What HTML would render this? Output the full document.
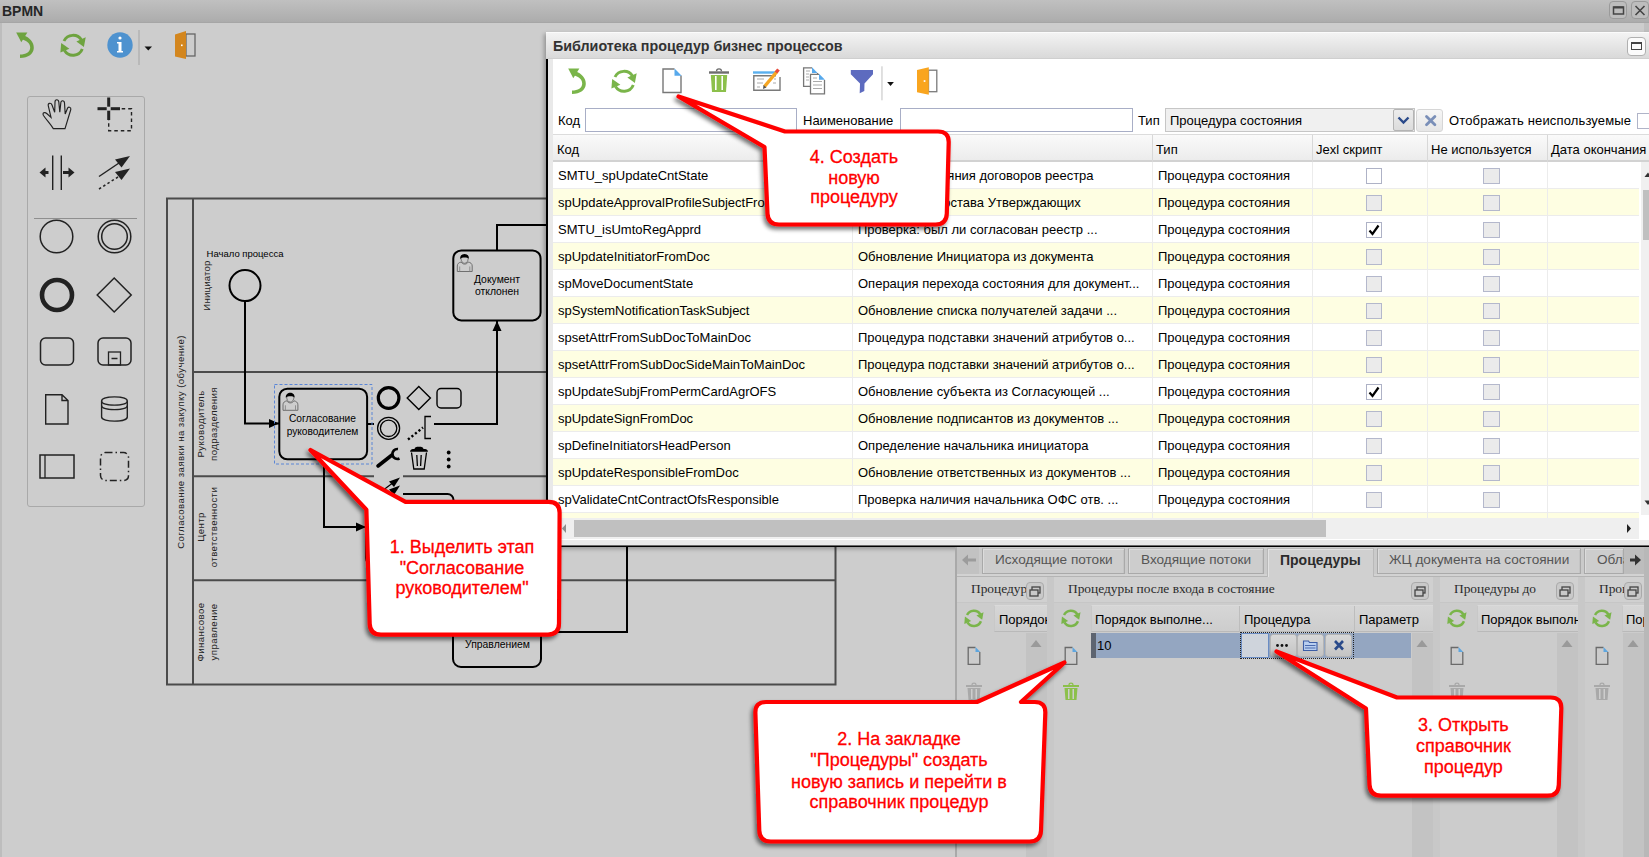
<!DOCTYPE html>
<html><head><meta charset="utf-8">
<style>
*{box-sizing:border-box}
html,body{margin:0;padding:0}
body{width:1649px;height:857px;position:relative;overflow:hidden;background:#cdcdcd;font-family:"Liberation Sans",sans-serif;color:#000}
.a{position:absolute}
svg{position:absolute;left:0;top:0;overflow:visible}
.t{position:absolute;white-space:nowrap;line-height:1.15}
</style></head><body>

<!-- title bar -->
<div class="a" style="left:0;top:0;width:1649px;height:23px;background:linear-gradient(#c0c0c0,#acacac);border-bottom:1px solid #a6a6a6"></div>
<div class="t" style="left:2px;top:3px;font-size:14px;font-weight:bold;color:#262626">BPMN</div>
<div class="a" style="left:0;top:23px;width:2px;height:834px;background:#bdbdbd"></div>
<div class="a" style="left:1644px;top:23px;width:5px;height:9px;background:#c0c0c0"></div>
<div class="a" style="left:1609px;top:1px;width:18px;height:18px;border:1px solid #9a9a9a;border-radius:4px;background:#bdbdbd"></div>
<div class="a" style="left:1631px;top:1px;width:18px;height:18px;border:1px solid #9a9a9a;border-radius:4px;background:#bdbdbd"></div>

<svg id="base" width="1649" height="857">
  <!-- window btn glyphs -->
  <rect x="1613.5" y="7" width="10" height="7" fill="none" stroke="#444" stroke-width="1.5"/>
  <rect x="1613.5" y="6.5" width="10" height="2" fill="#444"/>
  <path d="M1635.5,6 L1644.5,15 M1644.5,6 L1635.5,15" stroke="#444" stroke-width="1.6"/>

  <!-- toolbar -->
  <g id="undo1">
    <path d="M23.5,35.3 C29.5,37.5 34,42 33.8,48 C33.5,54 28.5,57.9 20,57.9 L20,54.6 C26,54.6 30.2,52 30.2,47.5 C30.2,43.5 27,40.8 22,39.2 Z" fill="#6ea33f"/>
    <polygon points="16.2,32.5 27.4,32.5 21.3,42.2" fill="#6ea33f"/>
  </g>
  <g id="refresh1" fill="none" stroke="#6ea33f" stroke-width="2.9">
    <path d="M64,41 A10,10 0 0 1 81.5,40"/>
    <path d="M82.3,49 A10,10 0 0 1 64.5,50.5"/>
  </g>
  <polygon points="76.4,41.6 85.7,37.2 83.9,47.1" fill="#6ea33f"/>
  <polygon points="61.2,42.9 69.4,48.8 60.4,52.6" fill="#6ea33f"/>
  <circle cx="120" cy="45" r="12.7" fill="#4e92cf"/>
  <circle cx="120" cy="38" r="1.6" fill="#fff"/>
  <path d="M117,42 L121.5,42 L121.5,51 L123,51 L123,52.5 L117,52.5 L117,51 L118.5,51 L118.5,43.5 L117,43.5Z" fill="#fff"/>
  <line x1="139" y1="30" x2="139" y2="65" stroke="#a5a5a5" stroke-width="1"/>
  <polygon points="144.5,46.5 152,46.5 148.25,50.5" fill="#111"/>
  <rect x="186" y="34" width="9" height="22" fill="none" stroke="#666" stroke-width="1.3"/>
  <polygon points="175,34.5 186,31 186,59 175,56.5" fill="#d3861e"/>
  <rect x="181" y="44.5" width="1.6" height="1.6" fill="#fff"/>
</svg>

<!-- palette -->
<div class="a" style="left:27px;top:96px;width:118px;height:411px;border:1px solid #a9a9a9;border-radius:3px;background:#cdcdcd"></div>
<svg id="palette" width="1649" height="857">
  <g fill="none" stroke="#222" stroke-width="1.5">
    <!-- hand -->
    <path d="M53.3,128.6 H65 L70.8,109.5 C71.3,107 68,106.2 67.3,108.8 L65.2,114 L64.5,103 C64.3,100 60.8,100 60.8,103 L59.8,112.3 L58.8,102 C58.5,99 55,99 55,102 L54.7,112.3 L52,105 C51,102.3 47.5,103 48.3,105.8 L51,117.4 L47,113.8 C44.5,111.5 42,113 43.5,115.5 C46.5,120 50.5,124 53.3,128.6 Z" stroke-width="1.15"/>
  </g>
  <rect x="108.7" y="108.7" width="22.8" height="22" fill="none" stroke="#222" stroke-width="1.4" stroke-dasharray="3.5,3"/>
  <path d="M108.7,97.5 V120 M97.5,108.7 H120" stroke="#fff" stroke-width="0" fill="none"/>
  <rect x="97.5" y="107.2" width="22.5" height="3" fill="#222"/>
  <rect x="107.2" y="97.5" width="3" height="22.5" fill="#222"/>
  <rect x="106.7" y="106.7" width="4" height="4" fill="#cdcdcd"/>
  <!-- space tool -->
  <path d="M52.7,155.5 V190 M61.3,155.5 V190" stroke="#222" stroke-width="1.4"/>
  <polygon points="39.5,172.5 45.5,167.5 45.5,177.5" fill="#222"/>
  <path d="M45,172.5 H48.5" stroke="#222" stroke-width="3"/>
  <polygon points="74.5,172.5 68.5,167.5 68.5,177.5" fill="#222"/>
  <path d="M69,172.5 H63" stroke="#222" stroke-width="3"/>
  <!-- connect -->
  <path d="M99,176.5 L119,163" stroke="#222" stroke-width="1.5"/>
  <polygon points="130,156 115,159.5 121.5,167.5" fill="#222"/>
  <path d="M99,189 L118,177" stroke="#222" stroke-width="1.5" stroke-dasharray="2.5,2.5"/>
  <polygon points="130,168.5 115,172 121.5,180" fill="#222"/>
  <line x1="34" y1="218.5" x2="137" y2="218.5" stroke="#8f8f8f" stroke-width="1"/>
  <g fill="none" stroke="#222">
    <circle cx="56.5" cy="236.5" r="16.3" stroke-width="1.5"/>
    <circle cx="114.5" cy="236.5" r="16.3" stroke-width="1.5"/>
    <circle cx="114.5" cy="236.5" r="12.8" stroke-width="1.5"/>
    <circle cx="57" cy="295" r="15" stroke-width="4.6"/>
    <polygon points="114.2,278 131.2,295 114.2,312 97.2,295" stroke-width="1.5"/>
    <rect x="40.5" y="338" width="33" height="27" rx="5" stroke-width="1.5"/>
    <rect x="98" y="338" width="33" height="27" rx="5" stroke-width="1.5"/>
    <rect x="108.5" y="352" width="12" height="13" stroke-width="1.3"/>
    <line x1="111.5" y1="358.5" x2="117.5" y2="358.5" stroke-width="1.5"/>
    <path d="M45.7,394.7 H62 L68,400.5 V424 H45.7 Z M62,394.7 V400.5 H68" stroke-width="1.4"/>
    <path d="M101.6,401 C101.6,395.5 127.3,395.5 127.3,401 V417 C127.3,422.5 101.6,422.5 101.6,417 Z" stroke-width="1.4"/>
    <path d="M101.6,401 C101.6,406.5 127.3,406.5 127.3,401 M101.6,405.5 C101.6,411 127.3,411 127.3,405.5" stroke-width="1.2"/>
    <rect x="40" y="455" width="34" height="23" stroke-width="1.5"/>
    <line x1="45" y1="455" x2="45" y2="478" stroke-width="1.3"/>
    <rect x="100.5" y="452.5" width="28" height="28" rx="5" stroke-width="1.5" stroke-dasharray="7,3,1.5,3"/>
  </g>
</svg>

<svg id="diagram" width="1649" height="857">
  <defs>
    <marker id="arr" viewBox="0 0 10 10" refX="10" refY="5" markerWidth="10" markerHeight="10" markerUnits="userSpaceOnUse" orient="auto"><path d="M0,0.5 L10,5 L0,9.5 Z" fill="#000"/></marker>
  </defs>
  <g fill="none" stroke="#4b4b4b" stroke-width="2">
    <rect x="167" y="198.5" width="668.5" height="486"/>
    <line x1="193" y1="198.5" x2="193" y2="684.5"/>
    <line x1="193" y1="372" x2="835.5" y2="372"/>
    <line x1="193" y1="476.3" x2="835.5" y2="476.3"/>
    <line x1="193" y1="580.2" x2="835.5" y2="580.2"/>
  </g>
  <g fill="none" stroke="#000" stroke-width="2">
    <circle cx="245" cy="285.6" r="15.5"/>
    <path d="M245,301 V423.5 H279" marker-end="url(#arr)"/>
    <path d="M324,459.5 V527 H366" marker-end="url(#arr)"/>
    <path d="M367,424 H497 V321" marker-end="url(#arr)"/>
    <path d="M497,250.5 V225 H546"/>
    <path d="M541,632 H627 V546"/>
    <rect x="279.3" y="388.7" width="87.8" height="70.6" rx="8"/>
    <rect x="453.3" y="250.4" width="87.3" height="70" rx="8"/>
    <rect x="366" y="494" width="87.5" height="70" rx="6"/>
    <rect x="453" y="597" width="88" height="70" rx="8"/>
  </g>
  <rect x="274.5" y="384.5" width="97.5" height="79.5" fill="none" stroke="#5b86d6" stroke-width="1" stroke-dasharray="3,2"/>
  <g><path d="M457.3,271.5 V266 C457.3,263.5 459,262.5 461.2,262 C462.5,264.8 466.7,264.8 468.2,262 C470.4,262.5 472.2,263.5 472.2,266 V271.5 Z" fill="none" stroke="#6f6f6f" stroke-width="1"/>
    <path d="M459.7,266.5 V271.5 M469.8,266.5 V271.5" stroke="#888" stroke-width="0.9"/>
    <path d="M461,258 C460.8,261 462.5,263.3 464.6,263.3 C466.7,263.3 468.3,261 468.2,258" fill="none" stroke="#6f6f6f" stroke-width="0.9"/>
    <path d="M460.1,258.9 C459.6,252.3 469.4,252.3 468.9,258.6 C467,257 462,257 460.1,258.9 Z" fill="#000"/></g>
  <g transform="translate(-174.3,138.8)"><path d="M457.3,271.5 V266 C457.3,263.5 459,262.5 461.2,262 C462.5,264.8 466.7,264.8 468.2,262 C470.4,262.5 472.2,263.5 472.2,266 V271.5 Z" fill="none" stroke="#6f6f6f" stroke-width="1"/>
    <path d="M459.7,266.5 V271.5 M469.8,266.5 V271.5" stroke="#888" stroke-width="0.9"/>
    <path d="M461,258 C460.8,261 462.5,263.3 464.6,263.3 C466.7,263.3 468.3,261 468.2,258" fill="none" stroke="#6f6f6f" stroke-width="0.9"/>
    <path d="M460.1,258.9 C459.6,252.3 469.4,252.3 468.9,258.6 C467,257 462,257 460.1,258.9 Z" fill="#000"/></g>
  <g font-family="Liberation Sans" fill="#000" text-anchor="middle">
    <text x="245" y="257.3" font-size="9.5">Начало процесса</text>
    <text x="322.5" y="421.5" font-size="10.2">Согласование</text>
    <text x="322.5" y="434.5" font-size="10.2">руководителем</text>
    <text x="497" y="282.5" font-size="10.4">Документ</text>
    <text x="497" y="295" font-size="10.4">отклонен</text>
    <text x="497.5" y="648" font-size="10.4">Управлением</text>
  </g>
  <g font-family="Liberation Sans" fill="#222" text-anchor="middle" font-size="9.6" letter-spacing="0.45">
    <text transform="translate(184.2,442) rotate(-90)">Согласование заявки на закупку (обучение)</text>
    <text transform="translate(210,285.5) rotate(-90)" letter-spacing="0.2">Инициатор</text>
    <text transform="translate(203.5,424) rotate(-90)">Руководитель</text>
    <text transform="translate(216.5,424) rotate(-90)">подразделения</text>
    <text transform="translate(203.5,527) rotate(-90)">Центр</text>
    <text transform="translate(216.5,527) rotate(-90)">ответственности</text>
    <text transform="translate(203.5,632) rotate(-90)">Финансовое</text>
    <text transform="translate(216.5,632) rotate(-90)">управление</text>
  </g>
  <!-- context pad -->
  <g fill="#cdcdcd">
    <rect x="374" y="385" width="27" height="27"/>
    <rect x="404" y="385" width="27" height="27"/>
    <rect x="374" y="415" width="29" height="27"/>
    <rect x="403" y="415" width="31" height="27"/>
    <rect x="374" y="445" width="29" height="27"/>
    <rect x="374" y="472" width="29" height="27"/>
    <rect x="403" y="445" width="29" height="27"/>
  </g>
  <g fill="none" stroke="#000">
    <circle cx="388.6" cy="398" r="10.3" stroke-width="3.2"/>
    <polygon points="418.8,386.4 430.4,398 418.8,409.6 407.2,398" stroke-width="1.4"/>
    <rect x="437" y="388.5" width="24" height="19.5" rx="4" stroke-width="1.4"/>
    <circle cx="388.6" cy="428.3" r="11" stroke-width="1.3"/>
    <circle cx="388.6" cy="428.3" r="8.2" stroke-width="1.3"/>
    <path d="M408,439.5 L423,427.5" stroke-width="2.4" stroke-dasharray="2.2,2.3"/>
    <path d="M431,416.5 H425 V438.5 H431" stroke-width="1.3"/>
    <path d="M437,424 H497" stroke-width="2"/>
    <path d="M378,466 L392,455" stroke-width="3.6" stroke-linecap="round"/>
    <path d="M398,449 A5,5 0 1 0 399.5,458.5" stroke-width="2.6"/>
    <path d="M411.5,452.5 L413.8,469 H424.2 L426.5,452.5 M416.8,455 L417.4,466 M421.2,455 L420.6,466" stroke-width="1.3"/>
    <path d="M382,491 L392,483.5" stroke-width="1.2"/>
  </g>
  <path d="M410,451.8 C410,449.5 412,449 414.5,449 C415,447.2 416,446.8 419,446.8 C422,446.8 423,447.2 423.5,449 C426,449 428,449.5 428,451.8 Z" fill="#000"/>
  <circle cx="448.7" cy="452.5" r="1.9" fill="#000"/>
  <circle cx="448.7" cy="459.5" r="1.9" fill="#000"/>
  <circle cx="448.7" cy="466.5" r="1.9" fill="#000"/>
  <polygon points="400,477.5 389,481.5 394,487" fill="#000"/>
  <polygon points="400,485.5 389,489.5 394,495" fill="#000"/>
</svg>

<div id="dialog">
<div class="a" style="left:546px;top:32px;width:1110px;height:515px;box-shadow:-2px 2px 4px rgba(0,0,0,0.28);background:#fff"></div>
<div class="a" style="left:546px;top:32px;width:1110px;height:27px;background:linear-gradient(#f3f3f3,#d9d9d9);border-top:1px solid #fbfbfb;border-bottom:1px solid #cfcfcf"></div>
<div class="t" style="left:553px;top:38px;font-size:14.3px;font-weight:bold;color:#333">Библиотека процедур бизнес процессов</div>
<div class="a" style="left:1627px;top:37px;width:19px;height:19px;border:1px solid #b0b0b0;border-radius:4px;background:#fbfbfb"></div>
<div class="a" style="left:1631px;top:42px;width:11px;height:8px;border:1.6px solid #444;border-top-width:2.5px"></div>
<div class="a" style="left:546px;top:59px;width:2px;height:488px;background:#000"></div>
<div class="a" style="left:546px;top:545px;width:1110px;height:1px;background:#6a6a6a"></div><div class="a" style="left:546px;top:546px;width:1110px;height:1px;background:#000"></div>
<div class="a" style="left:548px;top:59px;width:5px;height:486px;background:#e9e9e9"></div>
<div class="a" style="left:553px;top:540px;width:1100px;height:5px;background:#e9e9e9"></div>
<div class="t" style="left:558px;top:114px;font-size:13px">Код</div>
<div class="a" style="left:585px;top:108px;width:212px;height:24px;border:1px solid #a8aec6;background:#fff"></div>
<div class="t" style="left:803px;top:114px;font-size:13px">Наименование</div>
<div class="a" style="left:900px;top:108px;width:233px;height:24px;border:1px solid #a8aec6;background:#fff"></div>
<div class="t" style="left:1138px;top:114px;font-size:13px">Тип</div>
<div class="a" style="left:1165px;top:108px;width:250px;height:24px;border:1px solid #c6c6c6;background:#f0f0f0"></div>
<div class="t" style="left:1170px;top:114px;font-size:13px">Процедура состояния</div>
<div class="a" style="left:1393px;top:109px;width:21px;height:22px;border:1px solid #b4b4b4;border-radius:2px;background:linear-gradient(#ececec,#dcdcdc)"></div>
<svg width="1649" height="857" style="left:0;top:0"><path d="M1398.5,117.5 L1403.5,122.5 L1408.5,117.5" fill="none" stroke="#2a4a8a" stroke-width="2.4"/><path d="M1426.5,116.4 L1434.9,124.8 M1434.9,116.4 L1426.5,124.8" stroke="#7a8fb8" stroke-width="2.8" stroke-linecap="round"/></svg>
<div class="a" style="left:1416px;top:109px;width:27px;height:23px;border:1px solid #d6d6d6;border-radius:3px;background:linear-gradient(#f6f6f6,#e6e6e6)"></div>
<svg width="1649" height="857" style="left:0;top:0"><path d="M1426.5,116.4 L1434.9,124.8 M1434.9,116.4 L1426.5,124.8" stroke="#7a8fb8" stroke-width="2.8" stroke-linecap="round"/></svg>
<div class="t" style="left:1449px;top:114px;font-size:13px;letter-spacing:0.15px">Отображать неиспользуемые</div>
<div class="a" style="left:1637px;top:113px;width:16px;height:16px;border:1px solid #b0b4c8;background:#fff"></div>
<div class="a" style="left:553px;top:134px;width:1096px;height:1px;background:#dcdcdc"></div>
<div class="a" style="left:553px;top:135px;width:1096px;height:27px;background:linear-gradient(#fafafa,#ececec);border-bottom:2px solid #d2d2d2"></div>
<div class="t" style="left:557px;top:143px;font-size:13px">Код</div>
<div class="t" style="left:856px;top:143px;font-size:13px">Наименование</div>
<div class="t" style="left:1156px;top:143px;font-size:13px">Тип</div>
<div class="t" style="left:1316px;top:143px;font-size:13px">Jexl скрипт</div>
<div class="t" style="left:1431px;top:143px;font-size:13px">Не используется</div>
<div class="t" style="left:1551px;top:143px;font-size:13px">Дата окончания</div>
<div class="a" style="left:852px;top:135px;width:1px;height:27px;background:#d8d8d8"></div>
<div class="a" style="left:1152px;top:135px;width:1px;height:27px;background:#d8d8d8"></div>
<div class="a" style="left:1312px;top:135px;width:1px;height:27px;background:#d8d8d8"></div>
<div class="a" style="left:1427px;top:135px;width:1px;height:27px;background:#d8d8d8"></div>
<div class="a" style="left:1547px;top:135px;width:1px;height:27px;background:#d8d8d8"></div>
<div class="a" style="left:553px;top:162px;width:1086px;height:27px;background:#ffffff;border-bottom:1px solid #ececec"></div>
<div class="t" style="left:558px;top:169px;font-size:13px;width:293px;overflow:hidden">SMTU_spUpdateCntState</div>
<div class="t" style="left:858px;top:169px;font-size:13px">Перевод состояния договоров реестра</div>
<div class="t" style="left:1158px;top:169px;font-size:13px">Процедура состояния</div>
<div class="a" style="left:1366px;top:168px;width:16px;height:16px;border:1px solid #aeb2c6;background:#fff"></div>
<div class="a" style="left:1483px;top:168px;width:17px;height:16px;border:1px solid #b4b8cc;background:#ebebeb"></div>
<div class="a" style="left:553px;top:189px;width:1086px;height:27px;background:#fefee2;border-bottom:1px solid #ececec"></div>
<div class="t" style="left:558px;top:196px;font-size:13px;width:293px;overflow:hidden">spUpdateApprovalProfileSubjectFromDoc</div>
<div class="t" style="left:858px;top:196px;font-size:13px">Обновление состава Утверждающих</div>
<div class="t" style="left:1158px;top:196px;font-size:13px">Процедура состояния</div>
<div class="a" style="left:1366px;top:195px;width:16px;height:16px;border:1px solid #b4b8cc;background:#ebebeb"></div>
<div class="a" style="left:1483px;top:195px;width:17px;height:16px;border:1px solid #b4b8cc;background:#ebebeb"></div>
<div class="a" style="left:553px;top:216px;width:1086px;height:27px;background:#ffffff;border-bottom:1px solid #ececec"></div>
<div class="t" style="left:558px;top:223px;font-size:13px;width:293px;overflow:hidden">SMTU_isUmtoRegApprd</div>
<div class="t" style="left:858px;top:223px;font-size:13px">Проверка: был ли согласован реестр ...</div>
<div class="t" style="left:1158px;top:223px;font-size:13px">Процедура состояния</div>
<div class="a" style="left:1366px;top:222px;width:16px;height:16px;border:1px solid #aeb2c6;background:#fff"></div>
<svg width="1649" height="857" style="left:0;top:0"><path d="M1369.5,230.5 L1372.5,234 L1378.5,225.5" fill="none" stroke="#000" stroke-width="2.2"/></svg>
<div class="a" style="left:1483px;top:222px;width:17px;height:16px;border:1px solid #b4b8cc;background:#ebebeb"></div>
<div class="a" style="left:553px;top:243px;width:1086px;height:27px;background:#fefee2;border-bottom:1px solid #ececec"></div>
<div class="t" style="left:558px;top:250px;font-size:13px;width:293px;overflow:hidden">spUpdateInitiatorFromDoc</div>
<div class="t" style="left:858px;top:250px;font-size:13px">Обновление Инициатора из документа</div>
<div class="t" style="left:1158px;top:250px;font-size:13px">Процедура состояния</div>
<div class="a" style="left:1366px;top:249px;width:16px;height:16px;border:1px solid #b4b8cc;background:#ebebeb"></div>
<div class="a" style="left:1483px;top:249px;width:17px;height:16px;border:1px solid #b4b8cc;background:#ebebeb"></div>
<div class="a" style="left:553px;top:270px;width:1086px;height:27px;background:#ffffff;border-bottom:1px solid #ececec"></div>
<div class="t" style="left:558px;top:277px;font-size:13px;width:293px;overflow:hidden">spMoveDocumentState</div>
<div class="t" style="left:858px;top:277px;font-size:13px">Операция перехода состояния для документ...</div>
<div class="t" style="left:1158px;top:277px;font-size:13px">Процедура состояния</div>
<div class="a" style="left:1366px;top:276px;width:16px;height:16px;border:1px solid #b4b8cc;background:#ebebeb"></div>
<div class="a" style="left:1483px;top:276px;width:17px;height:16px;border:1px solid #b4b8cc;background:#ebebeb"></div>
<div class="a" style="left:553px;top:297px;width:1086px;height:27px;background:#fefee2;border-bottom:1px solid #ececec"></div>
<div class="t" style="left:558px;top:304px;font-size:13px;width:293px;overflow:hidden">spSystemNotificationTaskSubject</div>
<div class="t" style="left:858px;top:304px;font-size:13px">Обновление списка получателей задачи ...</div>
<div class="t" style="left:1158px;top:304px;font-size:13px">Процедура состояния</div>
<div class="a" style="left:1366px;top:303px;width:16px;height:16px;border:1px solid #b4b8cc;background:#ebebeb"></div>
<div class="a" style="left:1483px;top:303px;width:17px;height:16px;border:1px solid #b4b8cc;background:#ebebeb"></div>
<div class="a" style="left:553px;top:324px;width:1086px;height:27px;background:#ffffff;border-bottom:1px solid #ececec"></div>
<div class="t" style="left:558px;top:331px;font-size:13px;width:293px;overflow:hidden">spsetAttrFromSubDocToMainDoc</div>
<div class="t" style="left:858px;top:331px;font-size:13px">Процедура подставки значений атрибутов о...</div>
<div class="t" style="left:1158px;top:331px;font-size:13px">Процедура состояния</div>
<div class="a" style="left:1366px;top:330px;width:16px;height:16px;border:1px solid #b4b8cc;background:#ebebeb"></div>
<div class="a" style="left:1483px;top:330px;width:17px;height:16px;border:1px solid #b4b8cc;background:#ebebeb"></div>
<div class="a" style="left:553px;top:351px;width:1086px;height:27px;background:#fefee2;border-bottom:1px solid #ececec"></div>
<div class="t" style="left:558px;top:358px;font-size:13px;width:293px;overflow:hidden">spsetAttrFromSubDocSideMainToMainDoc</div>
<div class="t" style="left:858px;top:358px;font-size:13px">Процедура подставки значений атрибутов о...</div>
<div class="t" style="left:1158px;top:358px;font-size:13px">Процедура состояния</div>
<div class="a" style="left:1366px;top:357px;width:16px;height:16px;border:1px solid #b4b8cc;background:#ebebeb"></div>
<div class="a" style="left:1483px;top:357px;width:17px;height:16px;border:1px solid #b4b8cc;background:#ebebeb"></div>
<div class="a" style="left:553px;top:378px;width:1086px;height:27px;background:#ffffff;border-bottom:1px solid #ececec"></div>
<div class="t" style="left:558px;top:385px;font-size:13px;width:293px;overflow:hidden">spUpdateSubjFromPermCardAgrOFS</div>
<div class="t" style="left:858px;top:385px;font-size:13px">Обновление субъекта из Согласующей ...</div>
<div class="t" style="left:1158px;top:385px;font-size:13px">Процедура состояния</div>
<div class="a" style="left:1366px;top:384px;width:16px;height:16px;border:1px solid #aeb2c6;background:#fff"></div>
<svg width="1649" height="857" style="left:0;top:0"><path d="M1369.5,392.5 L1372.5,396 L1378.5,387.5" fill="none" stroke="#000" stroke-width="2.2"/></svg>
<div class="a" style="left:1483px;top:384px;width:17px;height:16px;border:1px solid #b4b8cc;background:#ebebeb"></div>
<div class="a" style="left:553px;top:405px;width:1086px;height:27px;background:#fefee2;border-bottom:1px solid #ececec"></div>
<div class="t" style="left:558px;top:412px;font-size:13px;width:293px;overflow:hidden">spUpdateSignFromDoc</div>
<div class="t" style="left:858px;top:412px;font-size:13px">Обновление подписантов из документов ...</div>
<div class="t" style="left:1158px;top:412px;font-size:13px">Процедура состояния</div>
<div class="a" style="left:1366px;top:411px;width:16px;height:16px;border:1px solid #b4b8cc;background:#ebebeb"></div>
<div class="a" style="left:1483px;top:411px;width:17px;height:16px;border:1px solid #b4b8cc;background:#ebebeb"></div>
<div class="a" style="left:553px;top:432px;width:1086px;height:27px;background:#ffffff;border-bottom:1px solid #ececec"></div>
<div class="t" style="left:558px;top:439px;font-size:13px;width:293px;overflow:hidden">spDefineInitiatorsHeadPerson</div>
<div class="t" style="left:858px;top:439px;font-size:13px">Определение начальника инициатора</div>
<div class="t" style="left:1158px;top:439px;font-size:13px">Процедура состояния</div>
<div class="a" style="left:1366px;top:438px;width:16px;height:16px;border:1px solid #b4b8cc;background:#ebebeb"></div>
<div class="a" style="left:1483px;top:438px;width:17px;height:16px;border:1px solid #b4b8cc;background:#ebebeb"></div>
<div class="a" style="left:553px;top:459px;width:1086px;height:27px;background:#fefee2;border-bottom:1px solid #ececec"></div>
<div class="t" style="left:558px;top:466px;font-size:13px;width:293px;overflow:hidden">spUpdateResponsibleFromDoc</div>
<div class="t" style="left:858px;top:466px;font-size:13px">Обновление ответственных из документов ...</div>
<div class="t" style="left:1158px;top:466px;font-size:13px">Процедура состояния</div>
<div class="a" style="left:1366px;top:465px;width:16px;height:16px;border:1px solid #b4b8cc;background:#ebebeb"></div>
<div class="a" style="left:1483px;top:465px;width:17px;height:16px;border:1px solid #b4b8cc;background:#ebebeb"></div>
<div class="a" style="left:553px;top:486px;width:1086px;height:27px;background:#ffffff;border-bottom:1px solid #ececec"></div>
<div class="t" style="left:558px;top:493px;font-size:13px;width:293px;overflow:hidden">spValidateCntContractOfsResponsible</div>
<div class="t" style="left:858px;top:493px;font-size:13px">Проверка наличия начальника ОФС отв. ...</div>
<div class="t" style="left:1158px;top:493px;font-size:13px">Процедура состояния</div>
<div class="a" style="left:1366px;top:492px;width:16px;height:16px;border:1px solid #b4b8cc;background:#ebebeb"></div>
<div class="a" style="left:1483px;top:492px;width:17px;height:16px;border:1px solid #b4b8cc;background:#ebebeb"></div>
<div class="a" style="left:553px;top:513px;width:1086px;height:6px;background:#fefee2;border-bottom:1px solid #ececec"></div>
<div class="a" style="left:852px;top:162px;width:1px;height:356px;background:#ececec"></div>
<div class="a" style="left:1152px;top:162px;width:1px;height:356px;background:#ececec"></div>
<div class="a" style="left:1312px;top:162px;width:1px;height:356px;background:#ececec"></div>
<div class="a" style="left:1427px;top:162px;width:1px;height:356px;background:#ececec"></div>
<div class="a" style="left:1547px;top:162px;width:1px;height:356px;background:#ececec"></div>
<div class="a" style="left:1641px;top:162px;width:10px;height:353px;background:#f0f0f0"></div>
<div class="a" style="left:1643px;top:190px;width:8px;height:50px;background:#c0c0c0"></div>
<svg width="1649" height="857" style="left:0;top:0"><polygon points="1648,172.5 1644.5,177 1651.5,177" fill="#333"/><polygon points="1648,505 1644.5,500.5 1651.5,500.5" fill="#333"/></svg>
<div class="a" style="left:553px;top:518px;width:1086px;height:21px;background:#efefef"></div>
<div class="a" style="left:574px;top:520px;width:752px;height:17px;background:#c0c0c0"></div>
<svg width="1649" height="857" style="left:0;top:0"><polygon points="562,528.5 566,524 566,533" fill="#8f8f8f"/><polygon points="1631,528.5 1627,524 1627,533" fill="#222"/></svg>
<svg width="1649" height="857" style="left:0;top:0">
  <g transform="translate(552,36)">
    <path d="M23.5,35.3 C29.5,37.5 34,42 33.8,48 C33.5,54 28.5,57.9 20,57.9 L20,54.6 C26,54.6 30.2,52 30.2,47.5 C30.2,43.5 27,40.8 22,39.2 Z" fill="#7ab54a"/>
    <polygon points="16.2,32.5 27.4,32.5 21.3,42.2" fill="#7ab54a"/>
  </g>
  <g transform="translate(551,36)">
    <g fill="none" stroke="#7ab54a" stroke-width="2.9">
      <path d="M64,41 A10,10 0 0 1 81.5,40"/>
      <path d="M82.3,49 A10,10 0 0 1 64.5,50.5"/>
    </g>
    <polygon points="76.4,41.6 85.7,37.2 83.9,47.1" fill="#7ab54a"/>
    <polygon points="61.2,42.9 69.4,48.8 60.4,52.6" fill="#7ab54a"/>
  </g>
  <!-- new doc -->
  <path d="M674.5,69 H663 V92.5 H681 V75.5" fill="#fff" stroke="#777" stroke-width="1.4"/>
  <polygon points="674.5,68.5 681.7,75.8 674.5,75.8" fill="#57a9ec"/>
  <!-- trash -->
  <rect x="709" y="71.3" width="20" height="2.4" fill="#6e6e6e"/>
  <path d="M716.5,71.3 C716.5,68 721.5,68 721.5,71.3" fill="none" stroke="#6e6e6e" stroke-width="1.3"/>
  <polygon points="710.8,75 727.2,75 726,92 712,92" fill="#8cc04b"/>
  <rect x="715" y="76" width="1.6" height="14" fill="#fff"/>
  <rect x="721.4" y="76" width="1.6" height="14" fill="#fff"/>
  <!-- edit -->
  <rect x="753" y="71.3" width="24" height="2.4" fill="#5ab0ee"/>
  <path d="M776,75.8 H753.8 V90.3 H780 V77" fill="none" stroke="#7a7a7a" stroke-width="1.4"/>
  <path d="M757,79 H764 M757,83 H763 M757,87 H760 M774,79 H776 M773,83 H776" stroke="#aaa" stroke-width="1"/>
  <path d="M764.5,86.5 L777,71.5" stroke="#f5a623" stroke-width="3.4"/>
  <path d="M776,72.5 L778.5,69.5" stroke="#e84a3a" stroke-width="3.4"/>
  <polygon points="763,89 763.5,85 766.5,87.5" fill="#555"/>
  <!-- copy -->
  <path d="M812,67.8 H803.6 V86.3 H810" fill="#fff" stroke="#777" stroke-width="1.3"/>
  <polygon points="812,67.3 817.6,73 812,73" fill="#57a9ec"/>
  <path d="M817.5,73 V74" stroke="#777" stroke-width="1.3"/>
  <path d="M806,71 H810 M806,74 H809 M806,77 H809 M806,80 H809" stroke="#aaa" stroke-width="1"/>
  <path d="M819,74.3 H810.5 V93.8 H824.5 V80" fill="#fff" stroke="#777" stroke-width="1.3"/>
  <polygon points="819,73.8 825,79.8 819,79.8" fill="#57a9ec"/>
  <path d="M813,78 H817 M813,81.5 H822 M813,85 H822 M813,88.5 H822" stroke="#aaa" stroke-width="1"/>
  <!-- filter -->
  <polygon points="850.8,69.9 873,69.9 873,74.3 864.5,83.5 864.3,91 859.7,93.3 860,83.5 850.8,74.3" fill="#5d6bbf"/>
  <rect x="881.2" y="66.3" width="1.5" height="34" fill="#d6d6d6"/>
  <polygon points="887.2,82 893.9,82 890.5,86" fill="#111"/>
  <!-- door -->
  <rect x="928.5" y="70.2" width="8.3" height="21.5" fill="none" stroke="#7a7a7a" stroke-width="1.3"/>
  <polygon points="917,70 928.8,67.2 928.8,94.8 917,92.2" fill="#f9a51f"/>
  <rect x="923.7" y="80.2" width="1.7" height="1.7" fill="#fff"/>
</svg>

</div>
<div id="panel">
<div class="a" style="left:955px;top:547px;width:694px;height:310px;background:#cbcbcb"></div>
<div class="a" style="left:955px;top:547px;width:2px;height:310px;background:#a9a9a9"></div>
<div class="a" style="left:957px;top:547px;width:692px;height:27px;background:#cacaca"></div>
<div class="a" style="left:957px;top:574px;width:692px;height:3px;background:#d2d2d2;border-bottom:1px solid #b4b4b4"></div>
<div class="a" style="left:957px;top:547px;width:22px;height:27px;background:#c2c2c2"></div>
<div class="a" style="left:1624px;top:547px;width:20px;height:27px;background:#bdbdbd"></div>
<div class="a" style="left:1644px;top:547px;width:5px;height:310px;background:#b8b8b8"></div>
<div class="a" style="left:982px;top:548px;width:143px;height:26px;background:#cdcdcd;border:1px solid #a9a9a9;border-top-color:#bdbdbd;box-shadow:inset 1px 1px 0 #dcdcdc, inset -1px 0 0 #c4c4c4"></div>
<div class="t" style="left:995px;top:552px;font-size:13.6px;color:#555;width:130px;overflow:hidden">Исходящие потоки</div>
<div class="a" style="left:1128px;top:548px;width:136px;height:26px;background:#cdcdcd;border:1px solid #a9a9a9;border-top-color:#bdbdbd;box-shadow:inset 1px 1px 0 #dcdcdc, inset -1px 0 0 #c4c4c4"></div>
<div class="t" style="left:1141px;top:552px;font-size:13.6px;color:#555;width:123px;overflow:hidden">Входящие потоки</div>
<div class="a" style="left:1267px;top:548px;width:107px;height:29px;background:#d0d0d0;border:1px solid #b9b9b9;border-bottom:none;box-shadow:inset 1px 1px 0 #e2e2e2"></div>
<div class="t" style="left:1280px;top:552px;font-size:14px;font-weight:bold;color:#2b2b2b">Процедуры</div>
<div class="a" style="left:1377px;top:548px;width:204px;height:26px;background:#cdcdcd;border:1px solid #a9a9a9;border-top-color:#bdbdbd;box-shadow:inset 1px 1px 0 #dcdcdc, inset -1px 0 0 #c4c4c4"></div>
<div class="t" style="left:1389px;top:552px;font-size:13.6px;color:#555;width:192px;overflow:hidden">ЖЦ документа на состоянии</div>
<div class="a" style="left:1584px;top:548px;width:40px;height:26px;background:#cdcdcd;border:1px solid #a9a9a9;border-top-color:#bdbdbd;box-shadow:inset 1px 1px 0 #dcdcdc, inset -1px 0 0 #c4c4c4"></div>
<div class="t" style="left:1597px;top:552px;font-size:13.6px;color:#555;width:27px;overflow:hidden">Обла</div>
<div class="a" style="left:957px;top:577px;width:90px;height:280px;background:#cccccc"></div>
<div class="a" style="left:957px;top:577px;width:90px;height:26px;background:#d0d0d0;border-bottom:1px solid #c6c6c6"></div>
<div class="t" style="left:971px;top:581px;font-family:'Liberation Serif',serif;font-size:13.4px;color:#2a2a2a;width:55px;overflow:hidden">Процедур</div>
<div class="a" style="left:1026px;top:582px;width:18px;height:18px;border:1px solid #aaa;border-radius:4px;background:#c9c9c9"></div>
<div class="a" style="left:994px;top:605px;width:53px;height:27px;background:linear-gradient(#d6d6d6,#cdcdcd);border-top:1px solid #dadada;border-bottom:1px solid #b9b9b9;border-left:1px solid #c8c8c8"></div>
<div class="a" style="left:1026px;top:633px;width:21px;height:224px;background:#c3c3c3"></div>
<div class="a" style="left:1054px;top:577px;width:379px;height:280px;background:#cccccc"></div>
<div class="a" style="left:1054px;top:577px;width:379px;height:26px;background:#d0d0d0;border-bottom:1px solid #c6c6c6"></div>
<div class="t" style="left:1068px;top:581px;font-family:'Liberation Serif',serif;font-size:13.4px;color:#2a2a2a;width:343px;overflow:hidden">Процедуры после входа в состояние</div>
<div class="a" style="left:1411px;top:582px;width:18px;height:18px;border:1px solid #aaa;border-radius:4px;background:#c9c9c9"></div>
<div class="a" style="left:1091px;top:605px;width:342px;height:27px;background:linear-gradient(#d6d6d6,#cdcdcd);border-top:1px solid #dadada;border-bottom:1px solid #b9b9b9;border-left:1px solid #c8c8c8"></div>
<div class="a" style="left:1412px;top:633px;width:21px;height:224px;background:#c3c3c3"></div>
<div class="a" style="left:1440px;top:577px;width:138px;height:280px;background:#cccccc"></div>
<div class="a" style="left:1440px;top:577px;width:138px;height:26px;background:#d0d0d0;border-bottom:1px solid #c6c6c6"></div>
<div class="t" style="left:1454px;top:581px;font-family:'Liberation Serif',serif;font-size:13.4px;color:#2a2a2a;width:102px;overflow:hidden">Процедуры до</div>
<div class="a" style="left:1556px;top:582px;width:18px;height:18px;border:1px solid #aaa;border-radius:4px;background:#c9c9c9"></div>
<div class="a" style="left:1477px;top:605px;width:101px;height:27px;background:linear-gradient(#d6d6d6,#cdcdcd);border-top:1px solid #dadada;border-bottom:1px solid #b9b9b9;border-left:1px solid #c8c8c8"></div>
<div class="a" style="left:1557px;top:633px;width:21px;height:224px;background:#c3c3c3"></div>
<div class="a" style="left:1585px;top:577px;width:59px;height:280px;background:#cccccc"></div>
<div class="a" style="left:1585px;top:577px;width:59px;height:26px;background:#d0d0d0;border-bottom:1px solid #c6c6c6"></div>
<div class="t" style="left:1599px;top:581px;font-family:'Liberation Serif',serif;font-size:13.4px;color:#2a2a2a;width:25px;overflow:hidden">Проц</div>
<div class="a" style="left:1624px;top:582px;width:18px;height:18px;border:1px solid #aaa;border-radius:4px;background:#c9c9c9"></div>
<div class="a" style="left:1622px;top:605px;width:22px;height:27px;background:linear-gradient(#d6d6d6,#cdcdcd);border-top:1px solid #dadada;border-bottom:1px solid #b9b9b9;border-left:1px solid #c8c8c8"></div>
<div class="a" style="left:1623px;top:633px;width:21px;height:224px;background:#c3c3c3"></div>
<div class="a" style="left:1047px;top:577px;width:7px;height:280px;background:#c8c8c8"></div>
<div class="a" style="left:1433px;top:577px;width:7px;height:280px;background:#c8c8c8"></div>
<div class="a" style="left:1578px;top:577px;width:7px;height:280px;background:#c8c8c8"></div>
<div class="t" style="left:999px;top:613px;font-size:13px;width:48px;overflow:hidden">Порядок выполнения</div>
<div class="t" style="left:1095px;top:613px;font-size:13px">Порядок выполне...</div>
<div class="a" style="left:1239px;top:606px;width:1px;height:26px;background:#bdbdbd"></div>
<div class="t" style="left:1244px;top:613px;font-size:13px">Процедура</div>
<div class="a" style="left:1354px;top:606px;width:1px;height:26px;background:#bdbdbd"></div>
<div class="t" style="left:1359px;top:613px;font-size:13px">Параметр</div>
<div class="t" style="left:1481px;top:613px;font-size:13px;width:97px;overflow:hidden">Порядок выполнения</div>
<div class="t" style="left:1626px;top:613px;font-size:13px;width:18px;overflow:hidden">Порядок</div>
<div class="a" style="left:1091px;top:633px;width:320px;height:25px;background:#94a6c1"></div>
<div class="a" style="left:1091px;top:633px;width:5px;height:25px;background:#5d6470"></div>
<div class="t" style="left:1097px;top:639px;font-size:13px">10</div>
<div class="a" style="left:1240px;top:632px;width:114px;height:27px;border:1px dotted #222"></div>
<div class="a" style="left:1241px;top:633px;width:28px;height:25px;background:#cfd4dc;border:1px solid #6a8cc4"></div>
<div class="a" style="left:1270px;top:634px;width:27px;height:23px;border:1px solid #b4b4b4;border-radius:3px;background:linear-gradient(#d8d8d8,#c4c4c4)"></div>
<div class="a" style="left:1297px;top:634px;width:27px;height:23px;border:1px solid #b4b4b4;border-radius:3px;background:linear-gradient(#d8d8d8,#c4c4c4)"></div>
<div class="a" style="left:1325px;top:634px;width:27px;height:23px;border:1px solid #b4b4b4;border-radius:3px;background:linear-gradient(#d8d8d8,#c4c4c4)"></div>
<svg width="1649" height="857" style="left:0;top:0"><rect x="1032" y="587" width="8" height="6" fill="none" stroke="#444" stroke-width="1.3"/><rect x="1030" y="590" width="8" height="6" fill="#c9c9c9" stroke="#444" stroke-width="1.3"/><g transform="translate(964,609) scale(0.76) translate(-60,-33)"><g fill="none" stroke="#7ab54a" stroke-width="3.3"><path d="M64,41 A10,10 0 0 1 81.5,40"/><path d="M82.3,49 A10,10 0 0 1 64.5,50.5"/></g><polygon points="76.4,41.6 85.7,37.2 83.9,47.1" fill="#7ab54a"/><polygon points="61.2,42.9 69.4,48.8 60.4,52.6" fill="#7ab54a"/></g><path d="M975.5,647.5 H968.2 V664.3 H979.8 V652" fill="none" stroke="#6a6a6a" stroke-width="1.3"/><polygon points="975.5,647 980.3,652 975.5,652" fill="#5ea6df"/><rect x="966" y="685" width="16" height="2" fill="#a9a9a9"/><path d="M972,685 C972,682.5 976,682.5 976,685" fill="none" stroke="#a9a9a9" stroke-width="1.2"/><polygon points="967.5,688 980.5,688 979.5,700 968.5,700" fill="#a9a9a9"/><rect x="971" y="689" width="1.5" height="10" fill="#cdcdcd"/><rect x="975.5" y="689" width="1.5" height="10" fill="#cdcdcd"/><polygon points="1036,640 1030.5,647 1041.5,647" fill="#9a9a9a"/><rect x="1417" y="587" width="8" height="6" fill="none" stroke="#444" stroke-width="1.3"/><rect x="1415" y="590" width="8" height="6" fill="#c9c9c9" stroke="#444" stroke-width="1.3"/><g transform="translate(1061,609) scale(0.76) translate(-60,-33)"><g fill="none" stroke="#7ab54a" stroke-width="3.3"><path d="M64,41 A10,10 0 0 1 81.5,40"/><path d="M82.3,49 A10,10 0 0 1 64.5,50.5"/></g><polygon points="76.4,41.6 85.7,37.2 83.9,47.1" fill="#7ab54a"/><polygon points="61.2,42.9 69.4,48.8 60.4,52.6" fill="#7ab54a"/></g><path d="M1072.5,647.5 H1065.2 V664.3 H1076.8 V652" fill="none" stroke="#6a6a6a" stroke-width="1.3"/><polygon points="1072.5,647 1077.3,652 1072.5,652" fill="#5ea6df"/><rect x="1063" y="685" width="16" height="2" fill="#8cc04b"/><path d="M1069,685 C1069,682.5 1073,682.5 1073,685" fill="none" stroke="#8cc04b" stroke-width="1.2"/><polygon points="1064.5,688 1077.5,688 1076.5,700 1065.5,700" fill="#8cc04b"/><rect x="1068" y="689" width="1.5" height="10" fill="#cdcdcd"/><rect x="1072.5" y="689" width="1.5" height="10" fill="#cdcdcd"/><polygon points="1422,640 1416.5,647 1427.5,647" fill="#9a9a9a"/><rect x="1562" y="587" width="8" height="6" fill="none" stroke="#444" stroke-width="1.3"/><rect x="1560" y="590" width="8" height="6" fill="#c9c9c9" stroke="#444" stroke-width="1.3"/><g transform="translate(1447,609) scale(0.76) translate(-60,-33)"><g fill="none" stroke="#7ab54a" stroke-width="3.3"><path d="M64,41 A10,10 0 0 1 81.5,40"/><path d="M82.3,49 A10,10 0 0 1 64.5,50.5"/></g><polygon points="76.4,41.6 85.7,37.2 83.9,47.1" fill="#7ab54a"/><polygon points="61.2,42.9 69.4,48.8 60.4,52.6" fill="#7ab54a"/></g><path d="M1458.5,647.5 H1451.2 V664.3 H1462.8 V652" fill="none" stroke="#6a6a6a" stroke-width="1.3"/><polygon points="1458.5,647 1463.3,652 1458.5,652" fill="#5ea6df"/><rect x="1449" y="685" width="16" height="2" fill="#a9a9a9"/><path d="M1455,685 C1455,682.5 1459,682.5 1459,685" fill="none" stroke="#a9a9a9" stroke-width="1.2"/><polygon points="1450.5,688 1463.5,688 1462.5,700 1451.5,700" fill="#a9a9a9"/><rect x="1454" y="689" width="1.5" height="10" fill="#cdcdcd"/><rect x="1458.5" y="689" width="1.5" height="10" fill="#cdcdcd"/><polygon points="1567,640 1561.5,647 1572.5,647" fill="#9a9a9a"/><rect x="1630" y="587" width="8" height="6" fill="none" stroke="#444" stroke-width="1.3"/><rect x="1628" y="590" width="8" height="6" fill="#c9c9c9" stroke="#444" stroke-width="1.3"/><g transform="translate(1592,609) scale(0.76) translate(-60,-33)"><g fill="none" stroke="#7ab54a" stroke-width="3.3"><path d="M64,41 A10,10 0 0 1 81.5,40"/><path d="M82.3,49 A10,10 0 0 1 64.5,50.5"/></g><polygon points="76.4,41.6 85.7,37.2 83.9,47.1" fill="#7ab54a"/><polygon points="61.2,42.9 69.4,48.8 60.4,52.6" fill="#7ab54a"/></g><path d="M1603.5,647.5 H1596.2 V664.3 H1607.8 V652" fill="none" stroke="#6a6a6a" stroke-width="1.3"/><polygon points="1603.5,647 1608.3,652 1603.5,652" fill="#5ea6df"/><rect x="1594" y="685" width="16" height="2" fill="#a9a9a9"/><path d="M1600,685 C1600,682.5 1604,682.5 1604,685" fill="none" stroke="#a9a9a9" stroke-width="1.2"/><polygon points="1595.5,688 1608.5,688 1607.5,700 1596.5,700" fill="#a9a9a9"/><rect x="1599" y="689" width="1.5" height="10" fill="#cdcdcd"/><rect x="1603.5" y="689" width="1.5" height="10" fill="#cdcdcd"/><polygon points="1633,640 1627.5,647 1638.5,647" fill="#9a9a9a"/><circle cx="1277.5" cy="645.5" r="1.4" fill="#111"/><circle cx="1282" cy="645.5" r="1.4" fill="#111"/><circle cx="1286.5" cy="645.5" r="1.4" fill="#111"/><path d="M1303.5,641 H1308.5 L1309.5,642.5 H1317 V650.5 H1303.5 Z" fill="#b9cff0" stroke="#3d5ea6" stroke-width="1.1"/><path d="M1305,645.5 H1315.5 M1305,648 H1315.5" stroke="#3d5ea6" stroke-width="0.9"/><path d="M1335,641 L1343,649.5 M1343,641 L1335,649.5" stroke="#2a4a8a" stroke-width="2.6"/><path d="M967,560 H976" stroke="#9c9c9c" stroke-width="3"/><polygon points="962,560 968,554.5 968,565.5" fill="#9c9c9c"/><path d="M1630,560 H1637" stroke="#333" stroke-width="3"/><polygon points="1641,560 1635,554.5 1635,565.5" fill="#333"/></svg>
</div>
<div id="callouts">
<svg width="1649" height="857" style="left:0;top:0">
<defs><filter id="sh" x="-20%" y="-20%" width="140%" height="140%"><feGaussianBlur in="SourceAlpha" stdDeviation="2.2"/><feOffset dx="-2" dy="3" result="o"/><feComponentTransfer><feFuncA type="linear" slope="0.55"/></feComponentTransfer><feMerge><feMergeNode/><feMergeNode in="SourceGraphic"/></feMerge></filter></defs>
<path d="M405.5,501.8 L548.6,501.8 Q559.6,501.8 559.6,512.8 L559.0,623.6 Q559.0,634.6 548.0,634.6 L381.0,634.6 Q370.0,634.6 369.7,623.6 L366.4,509.6 L310.5,450.0 Z" fill="#fff" stroke="#ff0000" stroke-width="4.2" stroke-linejoin="round" filter="url(#sh)"/>
<path d="M785.0,131.5 L938.0,131.5 Q949.0,131.5 948.7,142.5 L946.8,213.5 Q946.5,224.5 935.5,224.5 L779.0,224.5 Q768.0,224.5 767.5,213.5 L764.5,147.0 L678.5,96.5 Z" fill="#fff" stroke="#ff0000" stroke-width="4.2" stroke-linejoin="round" filter="url(#sh)"/>
<path d="M755.4,713.0 Q755.0,702.0 766.0,702.0 L977.0,702.0 L1064.5,662.5 L1021.0,702.0 L1034.7,702.0 Q1045.7,702.0 1045.3,713.0 L1041.0,830.5 Q1040.6,841.5 1029.6,841.5 L770.7,841.5 Q759.7,841.5 759.3,830.5 Z" fill="#fff" stroke="#ff0000" stroke-width="4.2" stroke-linejoin="round" filter="url(#sh)"/>
<path d="M1397.0,697.5 L1550.6,697.5 Q1561.6,697.5 1561.3,708.5 L1558.8,784.7 Q1558.5,795.7 1547.5,795.7 L1381.0,795.7 Q1370.0,795.7 1369.5,784.7 L1366.0,708.5 L1276.5,651.5 Z" fill="#fff" stroke="#ff0000" stroke-width="4.2" stroke-linejoin="round" filter="url(#sh)"/>
<g font-family="Liberation Sans" font-size="18" fill="#ff0000" stroke="#ff0000" stroke-width="0.3" text-anchor="middle">
<text x="854" y="163">4. Создать</text>
<text x="854" y="183.6">новую</text>
<text x="854" y="203.2">процедуру</text>
<text x="462" y="552.7">1. Выделить этап</text>
<text x="462" y="573.7">&quot;Согласование</text>
<text x="462" y="594.3">руководителем&quot;</text>
<text x="899" y="745">2. На закладке</text>
<text x="899" y="766.4">&quot;Процедуры&quot; создать</text>
<text x="899" y="787.6">новую запись и перейти в</text>
<text x="899" y="808.4">справочник процедур</text>
<text x="1463.4" y="731.2">3. Открыть</text>
<text x="1463.4" y="751.9">справочник</text>
<text x="1463.4" y="772.9">процедур</text>
</g></svg>
</div>
</body></html>
